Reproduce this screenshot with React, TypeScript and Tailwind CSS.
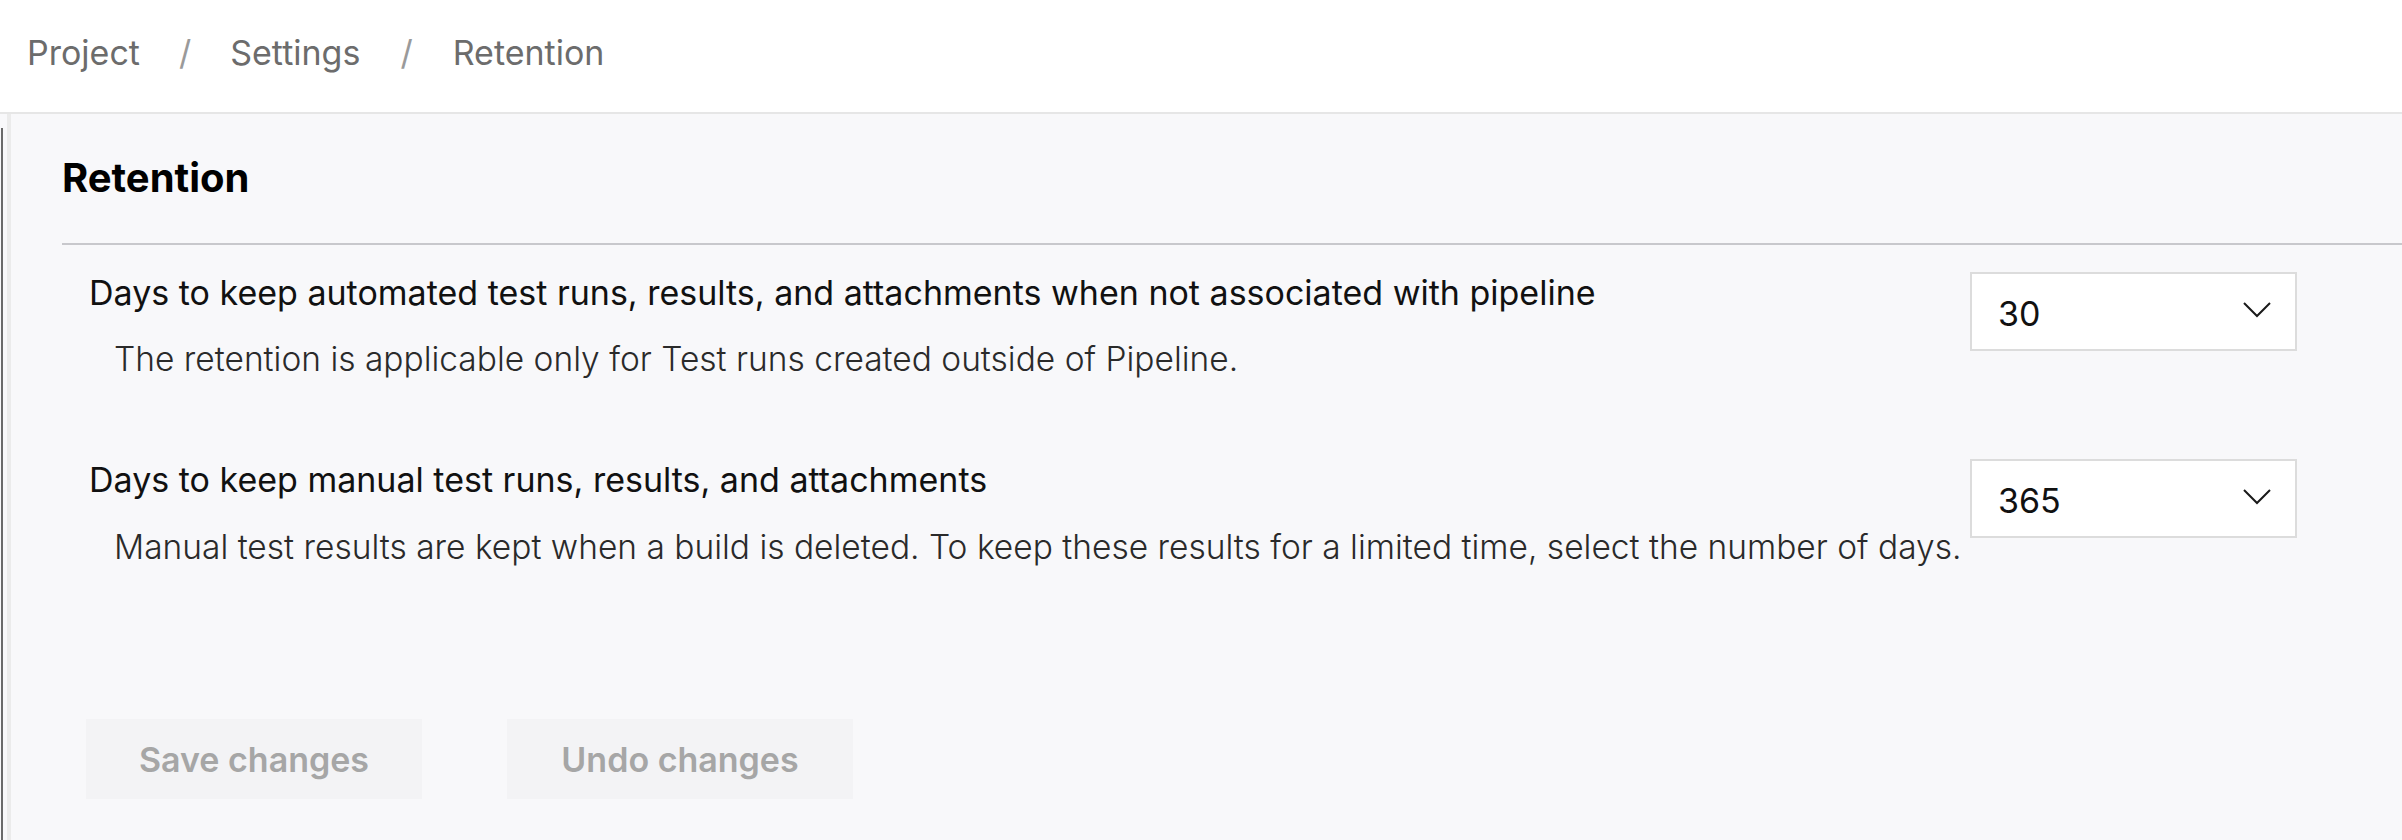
const font = { fontFamily: 'Inter, "Noto Sans", sans-serif' };

type Row = {
  label: string;
  help: string;
  value: string;
};

const rows: Row[] = [
  {
    label: 'Days to keep automated test runs, results, and attachments when not associated with pipeline',
    help: 'The retention is applicable only for Test runs created outside of Pipeline.',
    value: '30',
  },
  {
    label: 'Days to keep manual test runs, results, and attachments',
    help: 'Manual test results are kept when a build is deleted. To keep these results for a limited time, select the number of days.',
    value: '365',
  },
];

function DaysSelect({ value }: { value: string }) {
  return (
    <div className="flex h-[79px] w-[327px] shrink-0 items-center justify-between border-2 border-[#dcdcdc] bg-white pl-[26px] pr-[22px]">
      <span className="pt-[4px] text-[34px] leading-[40px] text-[#111]">{value}</span>
      <svg width="32" height="20" viewBox="0 0 32 20" className="mb-[4px]">
        <polyline points="3,3 16,16 29,3" fill="none" stroke="#1a1a1a" strokeWidth="2" />
      </svg>
    </div>
  );
}

export default function App() {
  return (
    <div className="flex min-h-[840px] w-[2402px] flex-col bg-[#f8f8fa]" style={font}>
      <header className="flex h-[114px] items-center border-b-2 border-[#e6e6e6] bg-white pb-[6px] pl-[27px] text-[34px] leading-[44px]">
        <span className="text-[#6c6c6c]">Project</span>
        <span className="mx-[39px] text-[#9a9a9a]">/</span>
        <span className="text-[#6c6c6c]">Settings</span>
        <span className="mx-[40px] text-[#9a9a9a]">/</span>
        <span className="text-[#6c6c6c]">Retention</span>
      </header>

      <div className="flex flex-1">
        <div className="flex w-[11px] shrink-0">
          <div className="w-[7px] pl-[1px] pt-[14px]">
            <div className="h-full w-[2px] bg-[#6a6a6a]" />
          </div>
          <div className="w-[4px] bg-[#ebebeb]" />
        </div>

        <main className="flex-1 pl-[51px]">
          <h1 className="mt-[40px] text-[40px] font-bold leading-[48px] text-black">Retention</h1>
          <div className="mt-[41px] h-[2px] bg-[#c8c8cc]" />

          <div className="pl-[27px] pr-[105px]">
            {rows.map((row, i) => (
              <div key={row.value} className={`flex items-start justify-between ${i === 0 ? 'mt-[27px]' : 'mt-[80px]'}`}>
                <div className={`min-w-0 ${i === 0 ? 'pt-[1px]' : 'pt-[1px]'}`}>
                  <div className="whitespace-nowrap text-[34px] font-normal leading-[40px] text-[#111]">{row.label}</div>
                  <div
                    className={`whitespace-nowrap pl-[25px] text-[33.5px] font-light leading-[40px] text-[#2a2a2a] ${i === 0 ? 'mt-[26px]' : 'mt-[27px]'}`}
                  >
                    {row.help}
                  </div>
                </div>
                <DaysSelect value={row.value} />
              </div>
            ))}
          </div>

          <div className="mt-[152px] flex gap-[85px] pl-[24px]">
            <button className="flex h-[80px] w-[336px] items-center justify-center bg-[#f3f3f5] text-[34px] font-semibold text-[#a6a6a6]">
              Save changes
            </button>
            <button className="flex h-[80px] w-[346px] items-center justify-center bg-[#f3f3f5] text-[34px] font-semibold text-[#a6a6a6]">
              Undo changes
            </button>
          </div>
        </main>
      </div>
    </div>
  );
}
